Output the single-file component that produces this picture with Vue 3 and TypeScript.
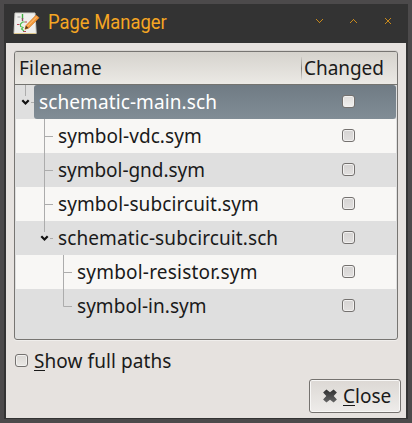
<script setup lang="ts">
import { ref } from 'vue'

interface PageRow {
  name: string
  depth: number
  expandable: boolean
  selected: boolean
  last: boolean
  tracking: number
}

const rows = ref<PageRow[]>([
  { name: 'schematic-main.sch', depth: 0, expandable: true, selected: true, last: true, tracking: 0.1 },
  { name: 'symbol-vdc.sym', depth: 1, expandable: false, selected: false, last: false, tracking: 0.06 },
  { name: 'symbol-gnd.sym', depth: 1, expandable: false, selected: false, last: false, tracking: -0.04 },
  { name: 'symbol-subcircuit.sym', depth: 1, expandable: false, selected: false, last: false, tracking: 0.09 },
  { name: 'schematic-subcircuit.sch', depth: 1, expandable: true, selected: false, last: true, tracking: 0.1 },
  { name: 'symbol-resistor.sym', depth: 2, expandable: false, selected: false, last: false, tracking: 0.2 },
  { name: 'symbol-in.sym', depth: 2, expandable: false, selected: false, last: true, tracking: 0.04 },
])
</script>

<template>
  <div class="desktop">
    <div class="window">
      <header class="titlebar">
        <svg class="app-icon" width="28" height="24" viewBox="0 0 28 24">
          <path d="M2 2H22L23.2 22.5H1Z" fill="#efefec" stroke="#d0d0ca" stroke-width="1" />
          <path d="M1 22.5H23" stroke="#dcc58a" stroke-width="1" />
          <rect x="4.5" y="5" width="3" height="2" fill="#c9c9c9" />
          <path d="M9.5 3V8" stroke="#3fae3f" stroke-width="1.4" />
          <path d="M9.5 7V10" stroke="#8a4a60" stroke-width="1.4" />
          <path d="M4 13.5H6.5M11.5 11H14M10 20.5H13" stroke="#b04858" stroke-width="1.2" />
          <path d="M11.5 11H9.5L7.5 13V15.5L10 16.5L8.5 18L11 20" fill="none" stroke="#4dbb4d" stroke-width="1.1" />
          <path d="M12 18.3L13 14.5L23 4.2L26.2 6.8L15.8 17Z" fill="#f39a3b" stroke="#cf7520" stroke-width=".7" />
          <path d="M14.4 15.3L24.2 5.4" stroke="#ffc47c" stroke-width="1" />
          <path d="M12 18.3L13 14.8L15.5 17Z" fill="#57351b" />
        </svg>
        <h1 class="title">Page Manager</h1>
        <svg class="window-buttons" width="78" height="8" viewBox="0 0 78 8" shape-rendering="crispEdges">
          <g fill="none" stroke="#c98a1c" stroke-width="1">
            <path d="M0 1.5H1M1 2.5H2M2 3.5H3M3 4.5H4M4 3.5H5M5 2.5H6M6 1.5H7" />
            <path d="M34 4.5H35M35 3.5H36M36 2.5H37M37 1.5H38M38 2.5H39M39 3.5H40M40 4.5H41" />
            <path d="M69 .5H70M70 1.5H71M71 2.5H73M71 3.5H73M70 4.5H71M69 5.5H70M74 .5H75M73 1.5H74M73 4.5H74M74 5.5H75" />
          </g>
        </svg>
      </header>

      <main class="content">
        <section class="tree">
          <div class="tree-header">
            <span class="col-name">Filename</span>
            <span class="col-changed">Changed</span>
          </div>
          <div
            v-for="row in rows"
            :key="row.name"
            class="row"
            :class="{ selected: row.selected }"
          >
            <svg class="guides" :width="18 + 19 * row.depth" height="34">
              <g :transform="`translate(${19 * row.depth} 0)`" fill="none" stroke="#acacac">
                <path v-if="row.expandable" d="M9.5 0V11M15 17.5H18" />
                <path v-else-if="row.last" d="M9.5 0V17.5H18" />
                <path v-else d="M9.5 0V34M9.5 17.5H18" />
                <path v-if="row.expandable" d="M6.3 15.3L9.5 18.5L12.7 15.3" stroke="#111" stroke-width="2.2" />
              </g>
            </svg>
            <div class="cells">
              <span class="name" :style="{ letterSpacing: row.tracking + 'px' }">{{ row.name }}</span>
              <span class="check"></span>
            </div>
          </div>
        </section>

        <div class="option">
          <span class="check"></span>
          <span class="option-label"><span class="mnemonic">S</span>how full paths</span>
        </div>

        <footer class="actions">
          <button class="close" type="button">
            <svg width="14" height="14" viewBox="0 0 14 14">
              <defs>
                <linearGradient id="cross" x1="0" y1="0" x2="0" y2="1">
                  <stop offset="0" stop-color="#2f2f2f" />
                  <stop offset="1" stop-color="#666" />
                </linearGradient>
              </defs>
              <path
                d="M3.4 .4L7 3.2L10.6 .4L13.9 3.6L10.7 7L13.9 10.4L10.6 13.6L7 10.8L3.4 13.6L.1 10.4L3.3 7L.1 3.6Z"
                fill="url(#cross)"
              />
            </svg>
            <span class="close-label"><span class="mnemonic">C</span>lose</span>
          </button>
        </footer>
      </main>
    </div>
  </div>
</template>

<style>
body {
  margin: 0;
}
</style>

<style scoped>
.desktop {
  box-sizing: border-box;
  width: 412px;
  height: 423px;
  padding: 4px;
  background: #4c4a4b;
  font-family: 'Noto Sans', sans-serif;
  font-size: 19px;
  color: #1a1a1a;
}
.window {
  box-sizing: border-box;
  height: 415px;
  padding: 0 2px 1px;
  background: #333;
}
.titlebar {
  display: flex;
  height: 39px;
}
.app-icon {
  margin: 7px 0 0 7px;
}
.title {
  margin: 4px 0 0 7px;
  width: 257px;
  font: 400 21px/28px Roboto, sans-serif;
  color: #f5a623;
  white-space: nowrap;
  transform: scaleX(0.876);
  transform-origin: 0 0;
}
.window-buttons {
  margin: 14px 0 0 11px;
}
.content {
  box-sizing: border-box;
  height: 375px;
  padding: 8px 8px 0;
  background: #e6e2df;
}
.tree {
  box-sizing: border-box;
  height: 289px;
  border: 1px solid #777572;
  border-radius: 3px;
  background: #dfdfdf;
  overflow: hidden;
  box-shadow: 0 1px 0 #f0eeec, 0 -1px 0 #d8d5d2;
  padding: 0 1px 0 1px;
}
.tree-header {
  display: flex;
  box-sizing: border-box;
  height: 33px;
  margin: 0 -1px;
  border-bottom: 1px solid #73736f;
  background: linear-gradient(#d6d3cd, #ebe9e5);
  line-height: 32px;
}
.col-name {
  width: 282px;
  padding-left: 4px;
  letter-spacing: 0.2px;
}
.col-changed {
  margin: 5px 0 4px;
  padding-left: 2px;
  border-left: 1px solid;
  border-image: linear-gradient(#d6d3cd, #85827e, #ebe9e5) 1;
  line-height: 22px;
  letter-spacing: -0.05px;
}
.row {
  display: flex;
  height: 34px;
  background: #dfdfdf;
}
.row:nth-child(odd) {
  background: #f8f7f5;
}
.guides {
  flex: none;
}
.cells {
  display: flex;
  flex: 1;
  align-items: center;
  justify-content: space-between;
  padding: 0 41px 0 5px;
  line-height: 34px;
}
.selected .cells {
  border-radius: 3px;
  background: linear-gradient(#707b84, #818d96);
  color: #fff;
}
.check {
  box-sizing: border-box;
  flex: none;
  width: 13px;
  height: 13px;
  margin-bottom: 1px;
  border: 1px solid #74716f;
  border-radius: 3px;
  background: linear-gradient(#d5d3d2, #e2e0df);
  box-shadow: inset 0 0 0 1px #f2f1f0;
}
.selected .check {
  background: linear-gradient(#dfdddb, #f1f0ef);
}
.option {
  display: flex;
  align-items: center;
  height: 26px;
  margin-top: 8px;
  padding-left: 1px;
}
.option .check {
  background: linear-gradient(#dad7d4, #eae8e5);
}
.option-label {
  margin-left: 6px;
  letter-spacing: 0.08px;
}
.mnemonic {
  display: inline-block;
  height: 20px;
  line-height: 22px;
  box-shadow: 0 1px 0 #1a1a1a;
}
.actions {
  display: flex;
  justify-content: flex-end;
  margin: 5px -3px 0 0;
}
.close {
  display: flex;
  box-sizing: border-box;
  align-items: center;
  width: 92px;
  height: 34px;
  padding: 0 0 0 13px;
  border: 1px solid #75726f;
  border-radius: 3px;
  background: linear-gradient(#dcd8d4, #eeecea);
  box-shadow: inset 0 0 0 1px #f8f7f6;
  font: inherit;
  color: inherit;
}
.close-label {
  margin-left: 6px;
}
</style>
